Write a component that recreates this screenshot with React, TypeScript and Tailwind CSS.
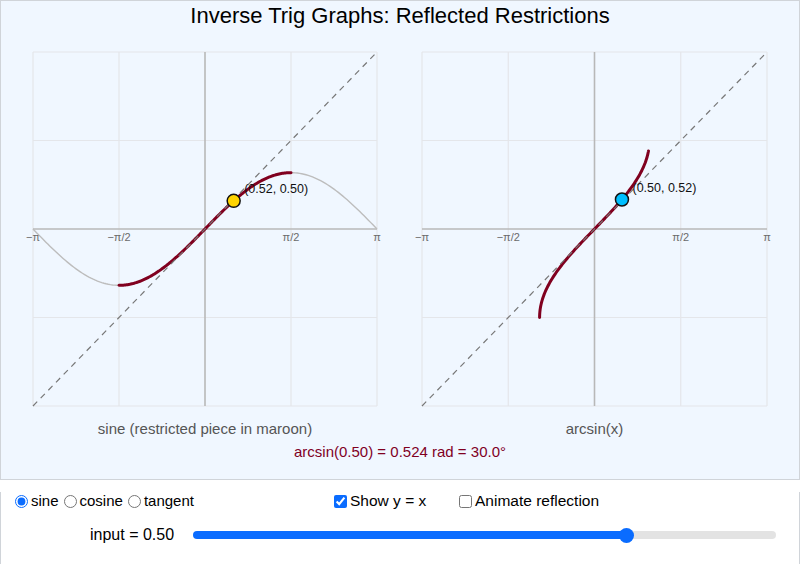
import React, { useEffect, useState } from 'react'

const PI = Math.PI

type Fn = 'sine' | 'cosine' | 'tangent'

interface Scale {
  sx: (x: number) => number
  sy: (y: number) => number
}

const scale = (w: number, h: number): Scale => ({
  sx: (x) => ((x + PI) / (2 * PI)) * w,
  sy: (y) => ((PI - y) / (2 * PI)) * h
})

// sample a parametric curve into an svg path
const trace = (f: (t: number) => [number, number], a: number, b: number, s: Scale, n = 160): string => {
  const parts: string[] = []
  for (let i = 0; i <= n; i++) {
    const t = a + ((b - a) * i) / n
    const [x, y] = f(t)
    parts.push(`${i ? 'L' : 'M'}${s.sx(x).toFixed(2)},${s.sy(y).toFixed(2)}`)
  }
  return parts.join('')
}

const ticks = [
  { v: -PI, label: '−π' },
  { v: -PI / 2, label: '−π/2' },
  { v: PI / 2, label: 'π/2' },
  { v: PI, label: 'π' }
]

const fns: Record<Fn, { f: (x: number) => number; inv: (x: number) => number; lo: number; hi: number; inverse: string }> = {
  sine: { f: Math.sin, inv: Math.asin, lo: -PI / 2, hi: PI / 2, inverse: 'arcsin' },
  cosine: { f: Math.cos, inv: Math.acos, lo: 0, hi: PI, inverse: 'arccos' },
  tangent: { f: Math.tan, inv: Math.atan, lo: -1.25, hi: 1.25, inverse: 'arctan' }
}

interface GraphProps {
  w: number
  h: number
  point: [number, number]
  dot: string
  diagonal: boolean
  children: (s: Scale) => React.ReactNode
}

const Graph = ({ w, h, point, dot, diagonal, children }: GraphProps): JSX.Element => {
  const s = scale(w, h)
  const [px, py] = point
  return (
    <svg width={w} height={h} className="block overflow-visible">
      {ticks.map((t) => (
        <line key={'gx' + t.label} x1={s.sx(t.v)} x2={s.sx(t.v)} y1={0} y2={h} stroke="#e4e6ea" strokeWidth={1.2} />
      ))}
      {ticks.map((t) => (
        <line key={'gy' + t.label} x1={0} x2={w} y1={s.sy(t.v)} y2={s.sy(t.v)} stroke="#e4e6ea" strokeWidth={1.2} />
      ))}
      <line x1={s.sx(0)} x2={s.sx(0)} y1={0} y2={h} stroke="#b8b8b8" strokeWidth={1.6} />
      <line x1={0} x2={w} y1={s.sy(0)} y2={s.sy(0)} stroke="#b8b8b8" strokeWidth={1.6} />
      {ticks.map((t) => (
        <text key={'t' + t.label} x={s.sx(t.v)} y={s.sy(0) + 11.5} textAnchor="middle" fontSize={11} fill="#6b6b6b">
          {t.label}
        </text>
      ))}
      {children(s)}
      {diagonal && <line x1={0} y1={h} x2={w} y2={0} stroke="#777" strokeWidth={1.2} strokeDasharray="6 5" />}
      <circle cx={s.sx(px)} cy={s.sy(py)} r={6.5} fill={dot} stroke="#111" strokeWidth={1.5} />
      <text x={s.sx(px) + 10.5} y={s.sy(py) - 8} fontSize={12.5} fill="#111">
        ({px.toFixed(2)}, {py.toFixed(2)})
      </text>
    </svg>
  )
}

const App = (): JSX.Element => {
  const [fn, setFn] = useState<Fn>('sine')
  const [diagonal, setDiagonal] = useState(true)
  const [animate, setAnimate] = useState(false)
  const [input, setInput] = useState(0.5)

  useEffect(() => {
    if (!animate) return
    const id = setInterval(() => setInput((v) => (v >= 1 ? -1 : Math.round((v + 0.02) * 100) / 100)), 60)
    return () => clearInterval(id)
  }, [animate])

  const cur = fns[fn]
  const out = cur.inv(input)
  const fill = ((7.5 + ((input + 1) / 2) * 568) / 583) * 100

  return (
    <div className="w-[800px] font-['Liberation_Sans',Arial,sans-serif] text-black">
      <div className="h-[480px] border border-[#d0d4d9] bg-[#f0f7ff] flex flex-col items-center pt-[3px]">
        <h1 className="text-[22px] leading-[24px]">Inverse Trig Graphs: Reflected Restrictions</h1>
        <div className="flex gap-[45px] mt-[24px]">
          <div className="flex flex-col items-center">
            <Graph w={344} h={354} point={[out, input]} dot="#ffd400" diagonal={diagonal}>
              {(s) => (
                <>
                  <path d={trace((t) => [t, cur.f(t)], -PI, PI, s)} fill="none" stroke="#bdbdbd" strokeWidth={1.4} />
                  <path d={trace((t) => [t, cur.f(t)], cur.lo, cur.hi, s)} fill="none" stroke="#80001f" strokeWidth={3} strokeLinecap="round" />
                </>
              )}
            </Graph>
            <p className="mt-[14px] text-[15px] leading-[17px] text-[#555]">{fn} (restricted piece in maroon)</p>
          </div>
          <div className="flex flex-col items-center">
            <Graph w={345} h={354} point={[input, out]} dot="#00bfff" diagonal={diagonal}>
              {(s) => (
                <path
                  d={trace((t) => [cur.f(t), t], cur.lo, fn === 'sine' ? 1.385 : cur.hi, s)}
                  fill="none"
                  stroke="#80001f"
                  strokeWidth={3}
                  strokeLinecap="round"
                />
              )}
            </Graph>
            <p className="mt-[14px] text-[15px] leading-[17px] text-[#555]">{cur.inverse}(x)</p>
          </div>
        </div>
        <p className="mt-[6px] text-[15px] leading-[17px] text-[#80001f]">
          {cur.inverse}({input.toFixed(2)}) = {out.toFixed(3)} rad = {((out * 180) / PI).toFixed(1)}°
        </p>
      </div>

      <div className="h-[80px] border-x border-b border-[#d0d4d9] bg-white">
        <div className="flex items-center h-[18px] mt-[12px] pl-[9px] text-[15px] leading-[18px]">
          <div className="flex items-center w-[320px]">
            {(Object.keys(fns) as Fn[]).map((k) => (
              <label key={k} className="flex items-center">
                <input
                  type="radio"
                  name="fn"
                  checked={fn === k}
                  onChange={() => setFn(k)}
                  className="m-0 ml-[5px] mr-[3px] w-[13px] h-[13px] accent-[#0a6cff]"
                />
                {k}
              </label>
            ))}
          </div>
          <label className="flex items-center w-[125px] text-[15.5px]">
            <input
              type="checkbox"
              checked={diagonal}
              onChange={(e) => setDiagonal(e.target.checked)}
              className="m-0 ml-[4px] mr-[3px] w-[13px] h-[13px] accent-[#0a6cff]"
            />
            Show y = x
          </label>
          <label className="flex items-center text-[15.5px]">
            <input
              type="checkbox"
              checked={animate}
              onChange={(e) => setAnimate(e.target.checked)}
              className="m-0 ml-[4px] mr-[3px] w-[13px] h-[13px] accent-[#0a6cff]"
            />
            Animate reflection
          </label>
        </div>
        <div className="flex items-center h-[16px] mt-[17px] pl-[89px]">
          <span className="w-[103px] text-[16px] leading-[18px]">input = {input.toFixed(2)}</span>
          <input
            type="range"
            min={-1}
            max={1}
            step={0.01}
            value={input}
            onChange={(e) => setInput(parseFloat(e.target.value))}
            style={{ background: `linear-gradient(to right, #0a6cff 0 ${fill}%, #e3e3e3 ${fill}% 100%)` }}
            className="w-[583px] h-[8px] m-0 appearance-none rounded-full outline-none [&::-webkit-slider-thumb]:appearance-none [&::-webkit-slider-thumb]:w-[15px] [&::-webkit-slider-thumb]:h-[15px] [&::-webkit-slider-thumb]:rounded-full [&::-webkit-slider-thumb]:bg-[#0a6cff]"
          />
        </div>
      </div>
    </div>
  )
}

export default App
